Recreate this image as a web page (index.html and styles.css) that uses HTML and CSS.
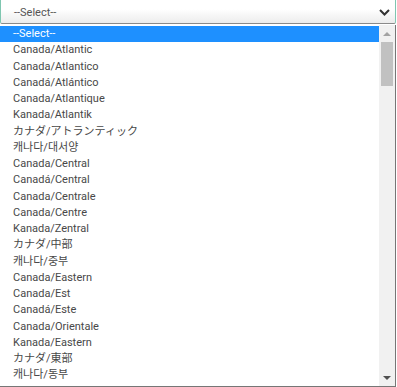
FILE: index.html
```html
<!DOCTYPE html>
<html lang="en">

<head>
    <meta charset="UTF-8">
    <meta name="viewport" content="width=device-width, initial-scale=1.0">
    <title>Timezone</title>
    <link rel="stylesheet" href="styles.css">
</head>

<body>
    <div class="select">
        <span class="value">--Select--</span>
        <svg class="chevron" width="11" height="7" viewBox="0 0 11 7">
            <path d="M1 1 L5.5 5.5 L10 1" fill="none" stroke="#333" stroke-width="2"/>
        </svg>
    </div>

    <div class="popup">
        <ul class="options">
            <li class="active">--Select--</li>
            <li>Canada/Atlantic</li>
            <li>Canada/Atlantico</li>
            <li>Canadá/Atlántico</li>
            <li>Canada/Atlantique</li>
            <li>Kanada/Atlantik</li>
            <li>カナダ/アトランティック</li>
            <li>캐나다/대서양</li>
            <li>Canada/Central</li>
            <li>Canadá/Central</li>
            <li>Canada/Centrale</li>
            <li>Canada/Centre</li>
            <li>Kanada/Zentral</li>
            <li>カナダ/中部</li>
            <li>캐나다/중부</li>
            <li>Canada/Eastern</li>
            <li>Canada/Est</li>
            <li>Canadá/Este</li>
            <li>Canada/Orientale</li>
            <li>Kanada/Eastern</li>
            <li>カナダ/東部</li>
            <li>캐나다/동부</li>
        </ul>
        <div class="scrollbar">
            <span class="arrow up"></span>
            <span class="track"><span class="thumb"></span></span>
            <span class="arrow down"></span>
        </div>
    </div>
</body>

</html>
```

FILE: styles.css
```css
body {
    margin: 0;
    font-family: Roboto, "Noto Sans CJK JP", "Noto Sans CJK KR", sans-serif;
    font-size: 11px;
    color: #484848;
    background: #fff;
}

.select {
    height: 24px;
    box-sizing: border-box;
    margin-right: 1px;
    padding: 1px 5px 0 13px;
    display: flex;
    align-items: center;
    justify-content: space-between;
    border: 1px solid #7fc6b0;
    border-top: none;
    border-bottom-color: #8a8a8a;
    border-radius: 0 0 2px 2px;
    background: linear-gradient(#fff 40%, #ececec);
}

.select .value {
    color: #555;
}

.chevron {
    display: block;
}

.popup {
    display: flex;
    height: 362px;
    margin-top: 1px;
    margin-right: 1px;
    border: 1px solid #767676;
    border-top: none;
    border-left: none;
    box-sizing: border-box;
}

.options {
    flex: 1;
    list-style: none;
    margin: 0;
    padding: 1px 0 0;
    overflow: hidden;
}

.options li {
    height: 16.25px;
    line-height: 16.25px;
    padding-left: 13px;
    white-space: nowrap;
}

.options li.active {
    background: #1e90ff;
    color: #fff;
}

.scrollbar {
    width: 16px;
    display: flex;
    flex-direction: column;
    background: #f1f1f1;
}

.arrow {
    height: 17px;
    display: flex;
    align-items: center;
    justify-content: center;
}

.arrow::before {
    content: "";
    border-left: 4px solid transparent;
    border-right: 4px solid transparent;
}

.arrow.up::before {
    border-bottom: 4px solid #a3a3a3;
}

.arrow.down::before {
    border-top: 4px solid #505050;
}

.track {
    flex: 1;
    padding: 0 2px;
}

.thumb {
    display: block;
    height: 44px;
    background: #c1c1c1;
}
```
